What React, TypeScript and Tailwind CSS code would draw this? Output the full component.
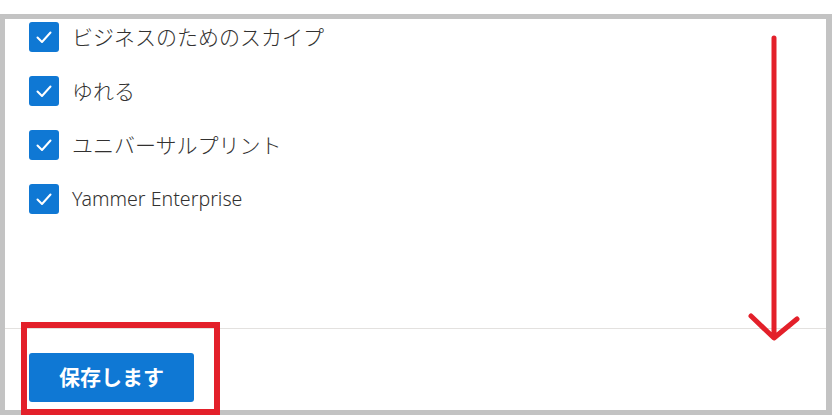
const items = [
  { label: "ビジネスのためのスカイプ", latin: false },
  { label: "ゆれる", latin: false },
  { label: "ユニバーサルプリント", latin: false },
  { label: "Yammer Enterprise", latin: true },
];

function CheckBox() {
  return (
    <span className="flex h-[30px] w-[30px] shrink-0 items-center justify-center rounded-[3px] bg-[#0f78d4]">
      <svg width="30" height="30" viewBox="0 0 30 30" fill="none">
        <path
          d="M8.5 15.5 L13 20 L21.5 10.5"
          stroke="#ffffff"
          strokeWidth="2"
          strokeLinecap="round"
          strokeLinejoin="round"
        />
      </svg>
    </span>
  );
}

export default function App() {
  return (
    <div
      className="relative h-[417px] w-[840px] overflow-hidden bg-white pt-[14px]"
      style={{ fontFamily: '"Noto Sans", "Noto Sans CJK JP", sans-serif' }}
    >
      <div className="flex h-[401px] w-[832px] flex-col border-b-[5px] border-l-[5px] border-r-[6px] border-t-[5px] border-[#c3c3c3]">
        {/* scrolled list */}
        <div className="flex h-[309px] flex-col gap-[24px] overflow-hidden pl-[24px] pt-[3px]">
          {items.map((it) => (
            <div key={it.label} className="flex h-[30px] items-center gap-[13px]">
              <CheckBox />
              <span
                className={
                  it.latin
                    ? "text-[19.6px] font-light leading-none text-[#323130]"
                    : "text-[21px] font-light leading-none text-[#323130]"
                }
              >
                {it.label}
              </span>
            </div>
          ))}
        </div>

        {/* footer */}
        <div className="flex-1 border-t border-[#e3e1df] pl-[24px] pt-[24px]">
          <button className="flex h-[49px] w-[165px] items-center justify-center rounded-[3px] bg-[#0f78d4] text-[21px] font-bold text-white">
            保存します
          </button>
        </div>
      </div>

      {/* annotations */}
      <div className="absolute left-[21px] top-[322px] h-[93px] w-[199px] border-[6px] border-[#e3202a]" />
      <svg
        className="absolute left-[740px] top-[30px]"
        width="70"
        height="320"
        viewBox="740 30 70 320"
        fill="none"
      >
        <path
          d="M774 38 L774 337 M751 316 L774 338 L797 319"
          stroke="#e3202a"
          strokeWidth="5"
          strokeLinecap="round"
          strokeLinejoin="round"
        />
      </svg>
    </div>
  );
}
